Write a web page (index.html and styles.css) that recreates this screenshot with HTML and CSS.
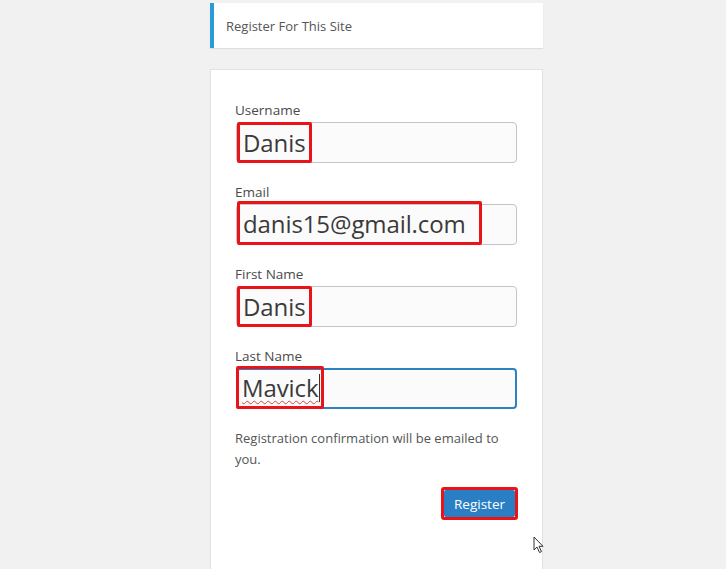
FILE: index.html
```html
<!DOCTYPE html>
<html>
<head>
<meta charset="utf-8">
<link rel="stylesheet" href="styles.css">
</head>
<body>
<div class="wrap">
  <div class="notice">Register For This Site</div>
  <form class="form">
    <div class="field">
      <label class="label">Username</label>
      <div class="input"><span class="mark">Danis</span></div>
    </div>
    <div class="field">
      <label class="label">Email</label>
      <div class="input"><span class="mark mark-big">danis15@gmail.com</span></div>
    </div>
    <div class="field">
      <label class="label">First Name</label>
      <div class="input"><span class="mark">Danis</span></div>
    </div>
    <div class="field">
      <label class="label">Last Name</label>
      <div class="input input-focus"><span class="mark"><span class="spell">Mavick</span><span class="caret"></span></span></div>
    </div>
    <p class="desc">Registration confirmation will be emailed to you.</p>
    <div class="actions">
      <span class="btn-mark"><button type="button" class="btn">Register</button></span>
    </div>
  </form>
</div>
<svg class="pointer" width="12" height="18" viewBox="0 0 12 18"><path d="M1 1 L1 14 L4 11 L6.5 16.5 L8.5 15.6 L6 10.3 L10 10.3 Z" fill="#fff" stroke="#333" stroke-width="1" stroke-linejoin="round"/></svg>
</body>
</html>
```
FILE: styles.css
```css
html, body {
  margin: 0;
  padding: 0;
  background: #f1f1f1;
  font-family: "Open Sans", "Noto Sans", sans-serif;
  color: #444;
  height: 569px;
  overflow: hidden;
}
.wrap {
  width: 333px;
  margin-left: 210px;
  padding-top: 3px;
}
.notice {
  background: #fff;
  border-left: 4px solid #2b9ad6;
  box-shadow: 0 1px 1px rgba(0,0,0,0.08);
  height: 45px;
  box-sizing: border-box;
  padding-left: 12px;
  display: flex;
  align-items: center;
  font-size: 13px;
  color: #555;
}
.form {
  margin-top: 21px;
  background: #fff;
  border: 1px solid #e2e2e2;
  padding: 30px 25px 60px 25px;
}
.field {
  display: flex;
  flex-direction: column;
  margin-bottom: 19px;
}
.label {
  font-size: 13.5px;
  color: #4a4a4a;
  line-height: 20px;
  margin-left: -1px;
  margin-bottom: 2px;
}
.input {
  height: 41px;
  box-sizing: border-box;
  border: 1px solid #c4c4c4;
  border-radius: 4px;
  background: #fbfbfc;
  display: flex;
  align-items: stretch;
}
.input-focus {
  border: 2px solid #2f82c0;
}
.mark {
  border: 3px solid #e8141a;
  border-radius: 2px;
  margin: -1px 0 -1px 0;
  padding: 0 4px 0 3px;
  display: flex;
  align-items: center;
  font-size: 24px;
  color: #3a3a3a;
  letter-spacing: -0.1px;
}
.input-focus .mark {
  margin: -4px 0 -2px -2px;
  padding-right: 1px;
}
.mark-big {
  margin: -4px 0 -1px 0;
  padding-right: 13px;
}
.spell {
  text-decoration: underline wavy #d94040;
  text-decoration-thickness: 1px;
  text-underline-offset: 3px;
}
.caret {
  display: inline-block;
  width: 1px;
  height: 28px;
  background: #333;
  margin-left: 1px;
}
.desc {
  margin: 3px 0 0 -1px;
  font-size: 13px;
  line-height: 21px;
  color: #555;
  padding-right: 10px;
}
.actions {
  display: flex;
  justify-content: flex-end;
  margin-top: 17px;
  margin-right: -1px;
}
.btn-mark {
  display: inline-flex;
  border: 3px solid #e8141a;
  border-radius: 3px;
}
.btn {
  background: #2a7fc4;
  color: #fff;
  border: none;
  border-radius: 2px;
  font-family: "Open Sans", "Noto Sans", sans-serif;
  font-size: 13.5px;
  height: 27px;
  padding: 0 10px;
}
.pointer {
  position: absolute;
  left: 533px;
  top: 536px;
}
```
